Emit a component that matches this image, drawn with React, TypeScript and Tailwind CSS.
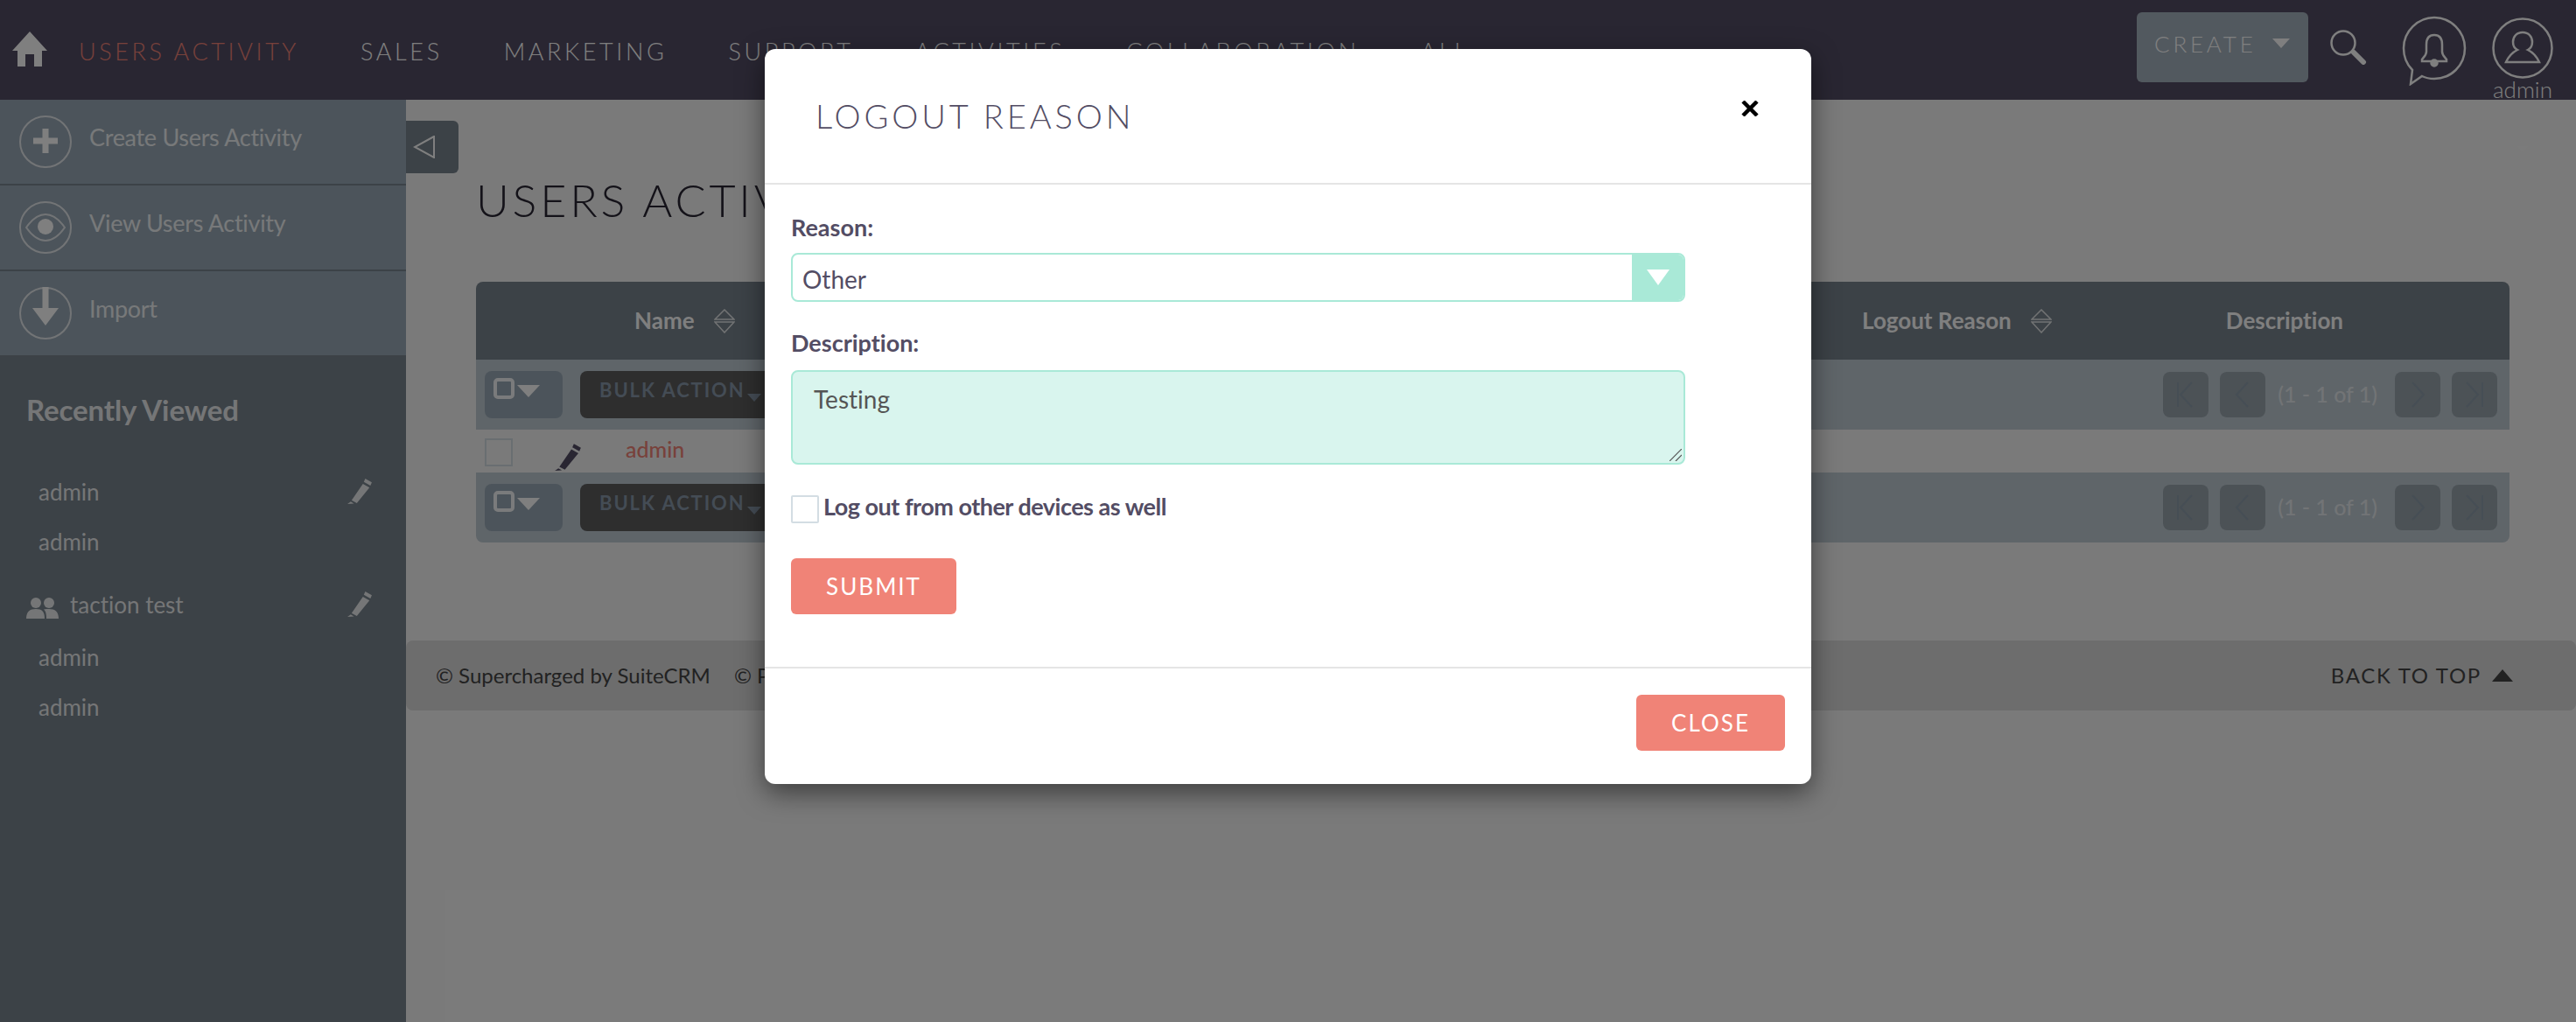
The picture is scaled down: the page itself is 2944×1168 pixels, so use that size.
import React from 'react';

const NAV = ['SALES', 'MARKETING', 'SUPPORT', 'ACTIVITIES', 'COLLABORATION', 'ALL'];

function SortIcon() {
  return (
    <svg width="24" height="28" viewBox="0 0 24 28" fill="none" stroke="#ffffff" strokeWidth="1.5" className="opacity-80">
      <path d="M1 12 L12 1 L23 12 Z" />
      <path d="M1 15 L23 15 L12 27 Z" />
    </svg>
  );
}

function Pencil({ className }: { className: string }) {
  return (
    <svg viewBox="0 0 28 28" className={className} fill="currentColor">
      <path d="M20 1 L27 5 L25.5 8.5 L18.5 4.5 Z" />
      <path d="M17.5 6.5 L24.5 10.5 L11 27 L5.5 24 Z" />
      <path d="M4.5 25.5 L8 27.5 L1 28 Z" />
    </svg>
  );
}

function PagerButton({ kind }: { kind: 'first' | 'prev' | 'next' | 'last' }) {
  return (
    <div className="flex h-[52px] w-[52px] items-center justify-center rounded-[8px] bg-[#98a4ac]">
      <svg width="28" height="36" viewBox="0 0 28 36" fill="none" stroke="#8898aa" strokeWidth="2" strokeOpacity="0.7">
        {kind === 'first' && <path d="M5 4 V32 M21 4 L8 18 L21 32" />}
        {kind === 'prev' && <path d="M20 4 L7 18 L20 32" />}
        {kind === 'next' && <path d="M8 4 L21 18 L8 32" />}
        {kind === 'last' && <path d="M5 4 L18 18 L5 32 M23 4 V32" />}
      </svg>
    </div>
  );
}

function ActionsBar({ rounded }: { rounded?: boolean }) {
  return (
    <div className={`flex h-[80px] items-center bg-[#becad2] pl-[10px] pr-[14px] ${rounded ? 'rounded-b-[8px]' : ''}`}>
      <div className="flex h-[54px] w-[89px] items-start gap-[3px] rounded-[8px] bg-[#99a9b6] pl-[10px] pt-[8px]">
        <div className="h-[24px] w-[24px] rounded-[5px] border-[4px] border-white opacity-90" />
        <svg width="26" height="14" viewBox="0 0 26 14" className="mt-[8px]">
          <path d="M0 0 H26 L13 14 Z" fill="#ffffff" />
        </svg>
      </div>
      <div className="ml-[20px] flex h-[54px] w-[300px] items-start rounded-[8px] bg-[#5c5c5c] pl-[22px] pt-[8px] text-[22px] leading-[28px] font-bold tracking-[1.9px] text-[#8898aa]">
        BULK ACTION
        <svg width="16" height="9" viewBox="0 0 16 9" className="ml-[2px] mt-[18px]">
          <path d="M0 0 H16 L8 9 Z" fill="#8898aa" />
        </svg>
      </div>
      <div className="ml-auto flex items-center gap-[13px]">
        <PagerButton kind="first" />
        <PagerButton kind="prev" />
        <span className="ml-[1px] mr-[7px] whitespace-nowrap text-[25px] font-medium text-white opacity-60">(1 - 1 of 1)</span>
        <PagerButton kind="next" />
        <PagerButton kind="last" />
      </div>
    </div>
  );
}

function SideAction({ label, children }: { label: string; children: React.ReactNode }) {
  return (
    <div className="flex h-[96px] items-center bg-[#99a9b6] pl-[22px]">
      <svg width="60" height="60" viewBox="0 0 60 60" fill="none" stroke="#ffffff" strokeWidth="2" strokeOpacity="0.75">
        <circle cx="30" cy="30" r="29" />
        {children}
      </svg>
      <span className="-mt-[10px] ml-[20px] text-[27px] tracking-[-0.3px] text-white opacity-85">{label}</span>
    </div>
  );
}

function RecentRow({ label, className, edit, group }: { label: string; className: string; edit?: boolean; group?: boolean }) {
  return (
    <div className={`flex items-center text-[26px] text-white opacity-85 ${className}`}>
      {group ? (
        <svg width="37" height="24" viewBox="0 0 37 24" fill="#ffffff" className="ml-[30px] mr-[13px] mt-[6px]">
          <circle cx="11" cy="6" r="6" />
          <circle cx="26" cy="6" r="6" />
          <path d="M0 24 C0 16 4 13 11 13 C18 13 21 16 21 24 Z" />
          <path d="M23 24 C23 18 22 15 20 13.5 C22 13 24 13 26 13 C33 13 37 16 37 24 Z" />
        </svg>
      ) : (
        <div className="w-[44px]" />
      )}
      <span>{label}</span>
      {edit && <Pencil className="ml-auto mr-[38px] -mt-[4px] h-[30px] w-[30px] text-white" />}
    </div>
  );
}

function Modal() {
  return (
    <div className="absolute inset-0 z-10 flex justify-center bg-black/50 pt-[56px]">
      <div className="h-[840px] w-[1196px] rounded-[12px] bg-white shadow-[0_10px_30px_rgba(0,0,0,0.5)]">
        <div className="flex h-[155px] items-center border-b-[2px] border-[#e5e5e5] pl-[58px] pr-[60px]">
          <h4 className="text-[38px] font-light tracking-[3.9px] text-[#534d64]">LOGOUT REASON</h4>
          <svg width="20" height="18" viewBox="0 0 20 18" className="ml-auto -mt-[18px]" stroke="#000000" strokeWidth="4.5" fill="none">
            <path d="M2 1 L18 17 M18 1 L2 17" />
          </svg>
        </div>
        <div className="h-[551px] pl-[30px] pt-[31px] text-[#534d64]">
          <label className="block h-[47px] text-[27px] leading-[36px] font-bold">Reason:</label>
          <div className="flex h-[56px] w-[1022px] items-center overflow-hidden rounded-[8px] border-[2px] border-[#a9e9d7] pl-[11px] text-[28px]">
            <span className="mt-[4px] flex-1">Other</span>
            <div className="flex h-[56px] w-[59px] items-center justify-center bg-[#a9e9d7]">
              <svg width="26" height="18" viewBox="0 0 26 18">
                <path d="M0 0 H26 L13 18 Z" fill="#ffffff" />
              </svg>
            </div>
          </div>
          <label className="mt-[29px] block h-[49px] text-[27px] leading-[36px] font-bold">Description:</label>
          <div className="relative h-[108px] w-[1022px]">
            <textarea
              readOnly
              defaultValue="Testing"
              className="block h-full w-full resize-none rounded-[8px] border-[2px] border-[#a9e9d7] bg-[#d9f5ee] px-[24px] py-[10px] text-[28px] text-[#555555] outline-none"
            />
            <svg width="14" height="14" viewBox="0 0 14 14" className="absolute bottom-[4px] right-[4px]" stroke="#555555" strokeWidth="1.2">
              <path d="M0 14 L14 0 M7 14 L14 7" />
            </svg>
          </div>
          <div className="mt-[35px] flex items-center">
            <div className="h-[32px] w-[32px] rounded-[2px] border-[2px] border-[#d3dde3]" />
            <span className="-mt-[6px] ml-[5px] text-[27px] leading-[32px] font-bold tracking-[-0.5px]">Log out from other devices as well</span>
          </div>
          <button className="mt-[40px] h-[64px] w-[189px] rounded-[6px] bg-[#f08377] text-[26px] tracking-[2px] text-white">SUBMIT</button>
        </div>
        <div className="flex justify-end border-t-[2px] border-[#e5e5e5] pr-[30px] pt-[30px]">
          <button className="h-[64px] w-[170px] rounded-[6px] bg-[#f08377] text-[26px] tracking-[2px] text-white">CLOSE</button>
        </div>
      </div>
    </div>
  );
}

export default function App() {
  return (
    <div className="relative h-[1168px] w-[2944px] overflow-hidden bg-[#f5f5f5] font-['Lato',sans-serif] text-[#282532] [font-variant-ligatures:none]">
      <header className="flex h-[114px] items-center bg-[#534d64] pl-[14px] pr-[26px]">
        <svg width="40" height="40" viewBox="0 0 40 40" fill="#ffffff" className="-mt-[2px]">
          <path d="M20 0 L40 22 L34 22 L34 40 L25 40 L25 26 L15 26 L15 40 L6 40 L6 22 L0 22 Z" />
        </svg>
        <nav className="ml-[36px] mt-[5px] flex gap-[70px] text-[27px] font-light tracking-[3.6px] text-white">
          <span className="text-[#f08377]">USERS ACTIVITY</span>
          {NAV.map((item) => (
            <span key={item}>{item}</span>
          ))}
        </nav>
        <div className="ml-auto flex h-full items-start">
          <div className="mt-[14px] flex h-[80px] w-[196px] items-start rounded-[6px] bg-[#a5b2be] pl-[20px] pt-[18px]">
            <span className="text-[26px] leading-[36px] font-light tracking-[3.8px] text-white">CREATE</span>
            <svg width="20" height="11" viewBox="0 0 20 11" className="ml-[18px] mt-[12px]">
              <path d="M0 0 H20 L10 11 Z" fill="#ffffff" />
            </svg>
          </div>
          <svg width="42" height="40" viewBox="0 0 42 40" fill="none" stroke="#ffffff" className="ml-[25px] mt-[34px]">
            <ellipse cx="15" cy="15" rx="13.5" ry="13.5" strokeWidth="2.5" />
            <path d="M27 26 L38 37" strokeWidth="6" strokeLinecap="round" />
          </svg>
          <svg width="74" height="80" viewBox="0 0 74 80" fill="none" stroke="#ffffff" strokeWidth="2.5" className="ml-[40px] mt-[18px]">
            <path d="M37 2 C56 2 72 18 72 37 C72 57 56 72 37 72 C31 72 27 71 23 69 L10 78 L12 62 C5 55 2 46 2 37 C2 18 18 2 37 2 Z" />
            <path d="M37 22 C30 22 28 27 28 33 L28 41 C28 45 25 47 23 50 L23 52 L51 52 L51 50 C49 47 46 45 46 41 L46 33 C46 27 44 22 37 22 Z" />
            <circle cx="37" cy="54" r="3.5" fill="#ffffff" />
          </svg>
          <div className="ml-[29px] flex w-[70px] flex-col items-center">
            <svg width="70" height="70" viewBox="0 0 70 70" fill="none" stroke="#ffffff" strokeWidth="2.5" className="mt-[20px]">
              <circle cx="35" cy="35" r="33.5" />
              <path d="M35 17 C28 17 24 22 24 28 C24 33 27 36 29 37 C25 39 20 42 16 51 L54 51 C50 42 45 39 41 37 C43 36 46 33 46 28 C46 22 42 17 35 17 Z" />
            </svg>
            <span className="-mt-[2px] text-[26px] leading-[28px] font-light text-white">admin</span>
          </div>
        </div>
      </header>

      <div className="flex h-[1054px]">
        <aside className="w-[464px] shrink-0 bg-[#78848e]">
          <div className="flex flex-col gap-[2px]">
            <SideAction label="Create Users Activity">
              <path d="M30 15 V43 M16 29 H44" strokeWidth="7" strokeOpacity="1" />
            </SideAction>
            <SideAction label="View Users Activity">
              <path d="M8 30 C15 20 22 15 30 15 C38 15 45 20 52 30 C45 40 38 45 30 45 C22 45 15 40 8 30 Z" />
              <circle cx="30" cy="29" r="9" fill="#ffffff" stroke="none" />
            </SideAction>
            <SideAction label="Import">
              <path d="M30 0 V24" strokeWidth="7" strokeOpacity="1" />
              <path d="M15 24 H45 L30 44 Z" fill="#ffffff" stroke="none" />
            </SideAction>
          </div>
          <h2 className="ml-[30px] mt-[42px] text-[33px] leading-[40px] font-bold tracking-[-0.1px] text-white opacity-85">Recently Viewed</h2>
          <div className="mt-[46px]">
            <RecentRow label="admin" className="h-[57px]" edit />
            <RecentRow label="admin" className="h-[57px]" />
            <RecentRow label="taction test" className="mt-[15px] h-[57px]" edit group />
            <RecentRow label="admin" className="mt-[3px] h-[57px]" />
            <RecentRow label="admin" className="h-[57px]" />
          </div>
        </aside>

        <main className="relative flex-1">
          <div className="mt-[24px] flex h-[60px] w-[60px] items-center rounded-r-[6px] bg-[#78848e] pl-[8px]">
            <svg width="26" height="26" viewBox="0 0 26 26" fill="none" stroke="#ffffff" strokeWidth="2">
              <path d="M24 1 L2 13 L24 25 Z" />
            </svg>
          </div>
          <h1 className="ml-[80px] h-[60px] text-[52px] leading-[60px] font-light tracking-[3.8px]">USERS ACTIVITY</h1>
          <section className="ml-[80px] mr-[76px] mt-[64px]">
            <div className="flex h-[89px] items-center rounded-t-[8px] bg-[#78848e] pl-[181px] pr-[190px] text-[26px] font-bold text-white">
              <span>Name</span>
              <div className="ml-[22px]"><SortIcon /></div>
              <span className="ml-auto">Logout Reason</span>
              <div className="ml-[22px]"><SortIcon /></div>
              <span className="ml-[199px]">Description</span>
            </div>
            <ActionsBar />
            <div className="flex h-[49px] items-start pl-[10px] pt-[10px]">
              <div className="h-[32px] w-[32px] border-[2px] border-[#d3dde3]" />
              <Pencil className="ml-[47px] mt-[5px] h-[32px] w-[32px] text-[#534d64]" />
              <span className="-mt-[2px] ml-[50px] text-[25px] leading-[28px] font-medium text-[#f08377]">admin</span>
            </div>
            <ActionsBar rounded />
          </section>
          <footer className="mt-[112px] flex h-[80px] items-center rounded-[8px] bg-[#dadada] pl-[34px] pr-[72px] text-[24px] text-[#444444]">
            <span>© Supercharged by SuiteCRM</span>
            <span className="ml-[27px]">© Powered By SugarCRM</span>
            <span className="ml-auto tracking-[1.7px]">BACK TO TOP</span>
            <svg width="24" height="14" viewBox="0 0 24 14" className="ml-[12px]">
              <path d="M12 0 L24 14 H0 Z" fill="#444444" />
            </svg>
          </footer>
          <svg width="14" height="7" viewBox="0 0 14 7" className="absolute right-[54px] top-[53px]">
            <path d="M0 0 H14 L7 7 Z" fill="#ffffff" fillOpacity="0.1" />
          </svg>
        </main>
      </div>

      <Modal />
    </div>
  );
}
